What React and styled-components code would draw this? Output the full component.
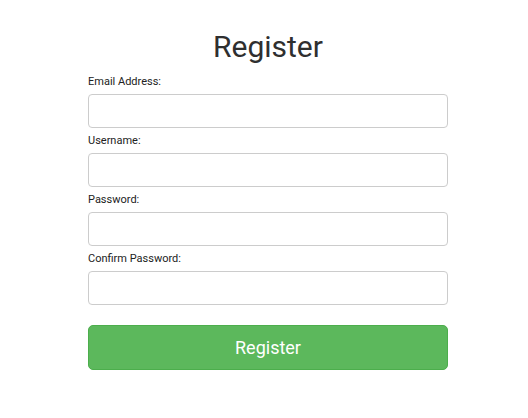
import React from "react";
import styled, { createGlobalStyle } from "styled-components";

const GlobalStyle = createGlobalStyle`
  html, body {
    margin: 0;
    padding: 0;
    background: #ffffff;
    font-family: Roboto, "Helvetica Neue", Arial, sans-serif;
  }
`;

const Page = styled.div`
  box-sizing: border-box;
  width: 528px;
  height: 418px;
  padding-left: 8px;
  display: flex;
  justify-content: center;
`;

const Form = styled.form`
  width: 360px;
  display: flex;
  flex-direction: column;
  padding-top: 27px;
`;

const Title = styled.h1`
  margin: 0 0 8px;
  text-align: center;
  font-size: 30px;
  font-weight: 400;
  line-height: 40px;
  color: #2f2f2f;
`;

const Field = styled.div`
  display: flex;
  flex-direction: column;
  margin-bottom: 6px;
`;

const Label = styled.label`
  font-size: 11px;
  line-height: 13px;
  color: #222;
  margin-bottom: 6px;
`;

const Input = styled.input`
  box-sizing: border-box;
  width: 100%;
  height: 34px;
  border: 1px solid #cccccc;
  border-radius: 4px;
  padding: 6px 12px;
  font-size: 14px;
  font-family: inherit;
  outline: none;
`;

const Button = styled.button`
  margin-top: 14px;
  height: 45px;
  width: 100%;
  border: 1px solid #4cae4c;
  border-radius: 5px;
  background: #5cb85c;
  color: #ffffff;
  font-family: inherit;
  font-size: 18px;
  cursor: pointer;
`;

const fields = [
  { id: "email", label: "Email Address:", type: "email" },
  { id: "username", label: "Username:", type: "text" },
  { id: "password", label: "Password:", type: "password" },
  { id: "confirm", label: "Confirm Password:", type: "password" },
];

export default function App() {
  return (
    <Page>
      <GlobalStyle />
      <Form onSubmit={(e) => e.preventDefault()}>
        <Title>Register</Title>
        {fields.map((f) => (
          <Field key={f.id}>
            <Label htmlFor={f.id}>{f.label}</Label>
            <Input id={f.id} type={f.type} />
          </Field>
        ))}
        <Button type="submit">Register</Button>
      </Form>
    </Page>
  );
}
